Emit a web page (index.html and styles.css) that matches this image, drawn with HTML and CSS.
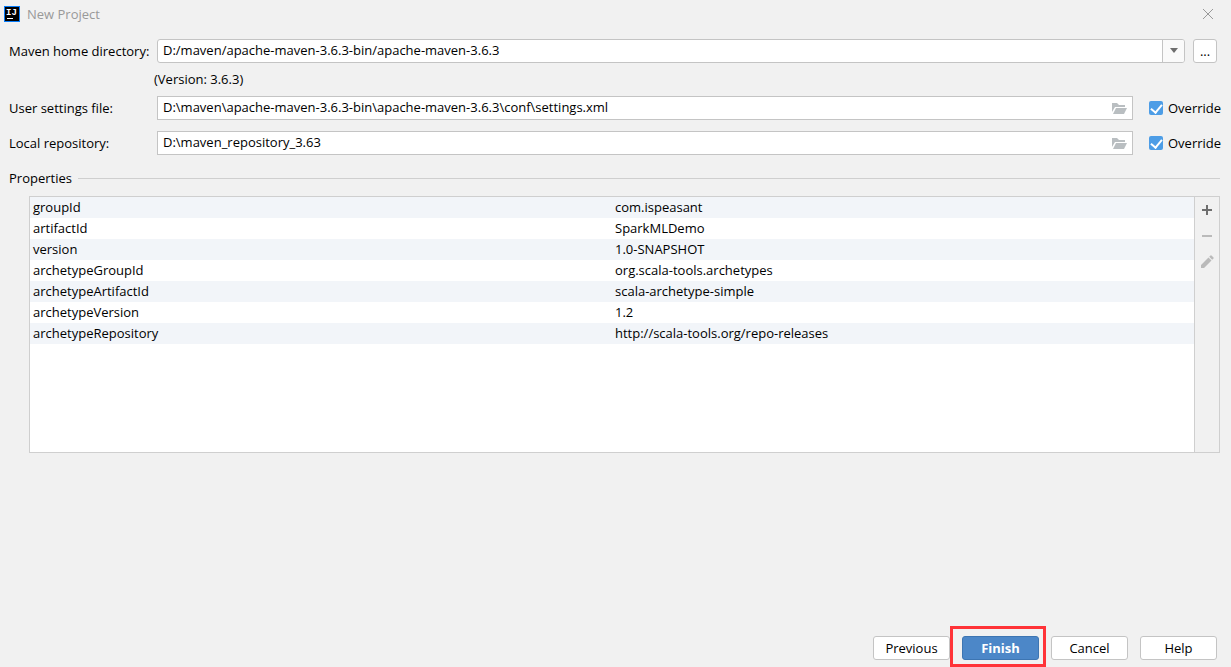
FILE: index.html
```html
<!DOCTYPE html>
<html lang="en">
<head>
  <meta charset="UTF-8">
  <meta name="viewport" content="width=device-width, initial-scale=1.0">
  <title>New Project</title>
  <link rel="stylesheet" href="styles.css">
</head>
<body>
  <header class="titlebar">
    <svg class="logo" width="16" height="16" viewBox="0 0 16 16" aria-hidden="true">
      <rect width="16" height="16" fill="#087cfa"/>
      <rect x="1" y="1" width="14" height="14" fill="#000"/>
      <text x="2" y="9" class="logo-text">IJ</text>
      <rect x="3" y="12" width="6" height="1" fill="#fff"/>
    </svg>
    <h1>New Project</h1>
    <button type="button" class="close" aria-label="Close">
      <svg width="12" height="12" viewBox="0 0 12 12"><path d="M1 1l10 10M11 1L1 11" stroke="#999" fill="none"/></svg>
    </button>
  </header>

  <form class="dialog">
    <div class="row home">
      <label for="home">Maven home directory:</label>
      <div class="combo">
        <select id="home">
          <option>D:/maven/apache-maven-3.6.3-bin/apache-maven-3.6.3</option>
        </select>
        <span class="arrow"><svg width="10" height="6" viewBox="0 0 10 6"><path d="M1 0h8L5 5z" fill="#6e6e6e"/></svg></span>
      </div>
      <button type="button" class="btn browse" aria-label="Browse">...</button>
    </div>
    <p class="version">(Version: 3.6.3)</p>

    <div class="row">
      <label for="settings">User settings file:</label>
      <div class="path">
        <input type="text" id="settings" value="D:\maven\apache-maven-3.6.3-bin\apache-maven-3.6.3\conf\settings.xml">
        <svg class="folder" width="16" height="12" viewBox="0 0 16 12"><path d="M0 9V0h5l2 2h6v2H3z" fill="#b9bec1"/><path d="M1 11l3-6h11l-3 6z" fill="#b9bec1"/></svg>
      </div>
      <label class="check"><input type="checkbox" checked> Override</label>
    </div>
    <div class="row">
      <label for="repo">Local repository:</label>
      <div class="path">
        <input type="text" id="repo" value="D:\maven_repository_3.63">
        <svg class="folder" width="16" height="12" viewBox="0 0 16 12"><path d="M0 9V0h5l2 2h6v2H3z" fill="#b9bec1"/><path d="M1 11l3-6h11l-3 6z" fill="#b9bec1"/></svg>
      </div>
      <label class="check"><input type="checkbox" checked> Override</label>
    </div>

    <h2>Properties</h2>
    <div class="properties">
      <div class="list">
        <table>
          <tr><td>groupId</td><td>com.ispeasant</td></tr>
          <tr><td>artifactId</td><td>SparkMLDemo</td></tr>
          <tr><td>version</td><td>1.0-SNAPSHOT</td></tr>
          <tr><td>archetypeGroupId</td><td>org.scala-tools.archetypes</td></tr>
          <tr><td>archetypeArtifactId</td><td>scala-archetype-simple</td></tr>
          <tr><td>archetypeVersion</td><td>1.2</td></tr>
          <tr><td>archetypeRepository</td><td>http://scala-tools.org/repo-releases</td></tr>
        </table>
      </div>
      <div class="tools">
        <button type="button" aria-label="Add">
          <svg width="16" height="16" viewBox="0 0 16 16"><path d="M3 7h4V3h2v4h4v2H9v4H7V9H3z" fill="#6e6e6e"/></svg>
        </button>
        <button type="button" aria-label="Remove" disabled>
          <svg width="16" height="16" viewBox="0 0 16 16"><path d="M3 7h10v2H3z" fill="#bababa"/></svg>
        </button>
        <button type="button" aria-label="Edit" disabled>
          <svg width="16" height="16" viewBox="0 0 16 16"><path d="M2 14v-3l7.500-7.500 3 3L5 14zM10.200 2.800l1.300-1.300q.5-.5 1 0l2 2q.5.5 0 1l-1.300 1.300z" fill="#bababa"/></svg>
        </button>
      </div>
    </div>

    <footer>
      <button type="button" class="btn">Previous</button>
      <span class="marked"><button type="submit" class="btn primary">Finish</button></span>
      <button type="button" class="btn">Cancel</button>
      <button type="button" class="btn">Help</button>
    </footer>
  </form>
</body>
</html>
```

FILE: styles.css
```css
* { box-sizing: border-box; }
body {
  margin: 0;
  min-height: 100vh;
  display: flex;
  flex-direction: column;
  background: #f1f1f1;
  color: #000;
  font: 13px/20px "Open Sans", "Noto Sans", sans-serif;
}
button, input, select { font: inherit; color: inherit; }
svg { display: block; }
h1, h2, p { margin: 0; font-size: 13px; font-weight: normal; }

.titlebar { display: flex; align-items: center; gap: 7px; height: 28px; padding: 0 17px 0 4px; }
.titlebar h1 { flex: 1; color: #999; }
.logo-text { font: bold 9px "Liberation Mono", monospace; fill: #fff; }
.close { padding: 0; border: 0; background: none; }

.dialog { flex: 1; display: flex; flex-direction: column; padding: 11px 11px 7px 9px; }
.row { display: grid; grid-template-columns: 148px 1fr 87px; align-items: center; height: 24px; margin-bottom: 11px; }
.row.home { grid-template-columns: 148px 1fr 35px; margin-bottom: 6px; }
.version { margin: 0 0 7px 145px; }

.combo, .path { position: relative; }
.combo select, .path input {
  display: block;
  width: 100%;
  height: 24px;
  padding: 0 30px 2px 5px;
  border: 1px solid #c4c4c4;
  border-radius: 0;
  background: #fff;
  appearance: none;
  outline: 0;
}
.combo select { border-radius: 3px; }
.arrow {
  position: absolute;
  top: 1px;
  right: 1px;
  bottom: 1px;
  width: 22px;
  display: grid;
  place-items: center;
  border-left: 1px solid #c4c4c4;
  border-radius: 0 2px 2px 0;
  background: #fafafa;
  pointer-events: none;
}
.folder { position: absolute; right: 5px; top: 7px; }

.check { display: flex; align-items: center; gap: 5px; padding-left: 16px; white-space: nowrap; }
.check input {
  appearance: none;
  flex: none;
  width: 14px;
  height: 14px;
  margin: 0;
  border-radius: 2px;
  background: #4d9de6;
  display: grid;
  place-items: center;
}
.check input:checked::before {
  content: "";
  width: 5px;
  height: 9px;
  margin-bottom: 2px;
  border: solid #fff;
  border-width: 0 2px 2px 0;
  transform: rotate(40deg);
}

h2 { display: flex; align-items: center; gap: 6px; margin: 2px 0 8px; }
h2::after { content: ""; flex: 1; height: 1px; background: #cfcfcf; }

.properties { display: flex; height: 257px; margin-left: 20px; border: 1px solid #cfcfcf; }
.list { flex: 1; background: #fff; }
table { width: 100%; table-layout: fixed; border-collapse: collapse; }
td { height: 21px; padding: 0 3px 1px; }
tr:nth-child(odd) { background: #f2f5f9; }
.tools { width: 25px; padding-top: 5px; border-left: 1px solid #cfcfcf; display: flex; flex-direction: column; align-items: center; gap: 10px; }
.tools button { padding: 0; border: 0; background: none; }

.btn {
  width: 77px;
  height: 24px;
  padding: 0;
  border: 1px solid #c4c4c4;
  border-radius: 3px;
  background: #fff;
}
.browse { width: 24px; margin-left: 8px; }
footer { display: flex; justify-content: flex-end; gap: 12px; margin-top: auto; padding-right: 3px; }
.marked { position: relative; }
.marked::after {
  content: "";
  position: absolute;
  inset: -10px -7px -7px -12px;
  border: 3px solid #ff3338;
  pointer-events: none;
}
.primary { border-color: #3d75b2; background: #4c87c8; color: #fff; font-weight: bold; }
```
